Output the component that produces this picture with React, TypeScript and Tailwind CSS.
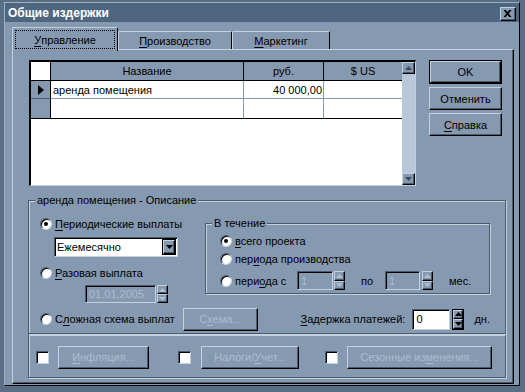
import type { ReactNode } from "react";

// Win95-style 3D edges in the blue-grey theme
const raised =
	"border border-t-[#c4d2e0] border-l-[#c4d2e0] border-r-black border-b-black shadow-[inset_-1px_-1px_0_#4a5b6f]";
const sunken =
	"border border-t-[#4a5b6f] border-l-[#4a5b6f] border-r-[#c4d2e0] border-b-[#c4d2e0] shadow-[inset_1px_1px_0_#000]";
const etched =
	"border border-[#4a5b6f] shadow-[inset_1px_1px_0_#c4d2e0,1px_1px_0_#c4d2e0]";

function Btn({
	children,
	className = "",
	disabled,
	isDefault,
}: {
	children: ReactNode;
	className?: string;
	disabled?: boolean;
	isDefault?: boolean;
}) {
	return (
		<div className={`flex ${isDefault ? "border border-black" : ""} ${className}`}>
			<div
				className={`flex flex-1 items-center justify-center ${raised} ${disabled ? "text-[#adbecf]" : "text-black"}`}
			>
				{children}
			</div>
		</div>
	);
}

function Radio({ checked }: { checked?: boolean }) {
	return (
		<span className="flex h-[12px] w-[12px] shrink-0 items-center justify-center rounded-full border border-t-[#4a5b6f] border-l-[#4a5b6f] border-r-[#c4d2e0] border-b-[#c4d2e0] bg-white shadow-[inset_1px_1px_0_#000]">
			{checked && <span className="h-[4px] w-[4px] rounded-full bg-black" />}
		</span>
	);
}

function Check() {
	return (
		<span className={`block h-[13px] w-[13px] shrink-0 bg-white ${sunken}`} />
	);
}

function Arrow({ up, color }: { up?: boolean; color: string }) {
	return (
		<svg width="7" height="4" viewBox="0 0 7 4">
			<path d={up ? "M0 4 L3.5 0 L7 4 Z" : "M0 0 L3.5 4 L7 0 Z"} fill={color} />
		</svg>
	);
}

function Spin({ disabled, className = "" }: { disabled?: boolean; className?: string }) {
	const c = disabled ? "#adbecf" : "#000";
	return (
		<div className={`flex w-[11px] flex-col ${disabled ? "" : "border border-black"} ${className}`}>
			<div className={`flex flex-1 items-center justify-center ${raised}`}>
				<Arrow up color={c} />
			</div>
			<div className={`flex flex-1 items-center justify-center ${raised}`}>
				<Arrow color={c} />
			</div>
		</div>
	);
}

function Field({
	value,
	disabled,
	className = "",
}: {
	value: string;
	disabled?: boolean;
	className?: string;
}) {
	return (
		<div
			className={`flex items-center px-[3px] ${sunken} ${disabled ? "bg-[#8599b1] text-[#adbecf]" : "bg-white text-black"} ${className}`}
		>
			{value}
		</div>
	);
}

function U({ children }: { children: ReactNode }) {
	return <span className="underline underline-offset-2">{children}</span>;
}

export default function App() {
	return (
		<div className="h-[392px] w-[525px] bg-[#5a6e86] pt-[2px] pl-[4px] font-['Liberation_Sans',Arial,sans-serif] text-[11px] leading-[14px] text-black">
			<div className="flex h-[384px] w-[516px] flex-col border border-t-[#9fb0c3] border-l-[#9fb0c3] border-r-black border-b-black bg-[#8599b1]">
				{/* Title bar */}
				<div className="flex h-[19px] items-center justify-between bg-[#4f6680] pl-[3px] pr-[3px]">
					<span className="text-[12px] font-bold text-white">Общие издержки</span>
					<div className={`mt-[2px] flex h-[14px] w-[16px] items-center justify-center ${raised} bg-[#8599b1]`}>
						<svg width="8" height="7" viewBox="0 0 8 7">
							<path d="M1 0 L7 7 M7 0 L1 7 M0 0 L6 7 M6 0 L0 7" stroke="#000" strokeWidth="1.1" />
						</svg>
					</div>
				</div>

				{/* Tabs */}
				<div className="mt-[5px] ml-[7px] flex h-[22px] items-end">
					<div className="relative z-10 -mb-[2px] flex h-[24px] w-[106px] rounded-t-[2px] border border-b-0 border-t-[#c4d2e0] border-l-[#c4d2e0] border-r-black bg-[#8599b1] p-[2px]">
						<div className="flex flex-1 items-center justify-center border border-dotted border-black">
							<U>У</U>правление
						</div>
					</div>
					<div className="flex h-[18px] w-[114px] items-center justify-center rounded-t-[2px] border border-b-0 border-t-[#c4d2e0] border-l-[#c4d2e0] border-r-black">
						<U>П</U>роизводство
					</div>
					<div className="flex h-[18px] w-[98px] items-center justify-center rounded-t-[2px] border border-b-0 border-t-[#c4d2e0] border-l-[#c4d2e0] border-r-black">
						<U>М</U>аркетинг
					</div>
				</div>

				{/* Tab panel */}
				<div className="ml-[7px] h-[335px] w-[502px] border border-t-[#c4d2e0] border-l-[#c4d2e0] border-r-black border-b-black shadow-[inset_-1px_-1px_0_#4a5b6f]">
					<div className="flex pt-[10px] pl-[16px]">
						{/* Grid */}
						<div className="flex h-[126px] w-[387px] border-t-2 border-l-2 border-r border-b border-t-black border-l-black border-r-[#c4d2e0] border-b-[#c4d2e0] bg-white">
							<div className="flex flex-1 flex-col">
								<div className="flex h-[19px]">
									<div className="w-[20px] border-r border-b border-black" />
									<div className="flex w-[193px] items-center justify-center border-r border-b border-black bg-[#8599b1]">
										Название
									</div>
									<div className="flex w-[80px] items-center justify-center border-r border-b border-black bg-[#8599b1]">
										руб.
									</div>
									<div className="flex flex-1 items-center justify-center border-b border-black bg-[#8599b1]">
										$ US
									</div>
								</div>
								<div className="flex h-[18px]">
									<div className="flex w-[20px] items-center justify-center border-r border-b border-r-black border-b-[#4a5b6f] bg-[#8599b1]">
										<svg width="6" height="10" viewBox="0 0 6 10">
											<path d="M0 0 L6 5 L0 10 Z" fill="#000" />
										</svg>
									</div>
									<div className="flex w-[193px] items-center border-r border-b border-[#8599b1] pl-[2px]">
										аренда помещения
									</div>
									<div className="flex w-[80px] items-center justify-end border-r border-b border-[#8599b1] pr-[1px]">
										40 000,00
									</div>
									<div className="flex-1 border-b border-[#8599b1]" />
								</div>
								<div className="flex h-[20px]">
									<div className="w-[20px] border-r border-b border-black bg-[#8599b1]" />
									<div className="w-[193px] border-r border-b border-r-[#8599b1] border-b-black" />
									<div className="w-[80px] border-r border-b border-r-[#8599b1] border-b-black" />
									<div className="flex-1 border-b border-black" />
								</div>
							</div>
							{/* Scrollbar */}
							<div className="flex w-[13px] flex-col justify-between bg-[#b8c8d8]">
								<div className={`flex h-[12px] items-center justify-center bg-[#8599b1] ${raised}`}>
									<Arrow up color="#3a4a5c" />
								</div>
								<div className={`flex h-[12px] items-center justify-center bg-[#8599b1] ${raised}`}>
									<Arrow color="#3a4a5c" />
								</div>
							</div>
						</div>

						{/* Dialog buttons */}
						<div className="ml-[13px] flex w-[73px] flex-col gap-[3px]">
							<Btn isDefault className="h-[24px]">
								OK
							</Btn>
							<Btn className="h-[23px]">Отменить</Btn>
							<Btn className="h-[23px]">
								<span>
									<U>С</U>правка
								</span>
							</Btn>
						</div>
					</div>

					{/* Description group */}
					<div className={`relative mt-[14px] ml-[15px] h-[134px] w-[478px] ${etched}`}>
						<span className="absolute -top-[8px] left-[6px] bg-[#8599b1] px-[2px]">
							аренда помещения - Описание
						</span>
						<div className="flex">
							{/* Left column */}
							<div className="flex w-[176px] flex-col pl-[11px]">
								<div className="mt-[16px] flex items-center gap-[3px]">
									<Radio checked />
									<span>
										<U>П</U>ериодические выплаты
									</span>
								</div>
								<div className={`mt-[6px] ml-[14px] flex h-[20px] w-[124px] items-center justify-between bg-white pl-[2px] pr-[1px] ${sunken}`}>
									<span>Ежемесячно</span>
									<div className="flex h-[16px] w-[14px] border border-black">
										<div className={`flex flex-1 items-center justify-center bg-[#8599b1] ${raised}`}>
											<Arrow color="#000" />
										</div>
									</div>
								</div>
								<div className="mt-[9px] flex items-center gap-[3px]">
									<Radio />
									<span>
										<U>Р</U>азовая выплата
									</span>
								</div>
								<div className="mt-[5px] ml-[45px] flex h-[18px]">
									<Field value="01.01.2005" disabled className="w-[71px]" />
									<Spin disabled className="ml-[1px]" />
								</div>
							</div>

							{/* During group */}
							<div className={`relative mt-[22px] h-[71px] w-[285px] ${etched}`}>
								<span className="absolute -top-[8px] left-[6px] bg-[#8599b1] px-[2px]">
									В течение
								</span>
								<div className="flex flex-col pl-[14px]">
									<div className="mt-[10px] flex items-center gap-[3px]">
										<Radio checked />
										<span>
											<U>в</U>сего проекта
										</span>
									</div>
									<div className="mt-[4px] flex items-center gap-[3px]">
										<Radio />
										<span>
											пер<U>и</U>ода производства
										</span>
									</div>
									<div className="mt-[5px] flex h-[19px] items-center">
										<Radio />
										<span className="ml-[3px] w-[62px]">
											пери<U>о</U>да с
										</span>
										<Field value="1" disabled className="h-[19px] w-[36px]" />
										<Spin className="ml-[1px] h-[19px]" disabled />
										<span className="ml-[16px] w-[24px]">по</span>
										<Field value="1" disabled className="h-[19px] w-[35px]" />
										<Spin className="ml-[2px] h-[19px]" disabled />
										<span className="ml-[16px]">мес.</span>
									</div>
								</div>
							</div>
						</div>

						{/* Bottom row of group */}
						<div className="mt-[5px] flex h-[22px] items-center pl-[11px] pr-[15px]">
							<Radio />
							<span className="ml-[3px]">
								С<U>л</U>ожная схема выплат
							</span>
							<Btn disabled className="ml-[8px] h-[23px] w-[75px]">
								<span>
									С<U>х</U>ема...
								</span>
							</Btn>
							<span className="ml-auto">
								<U>З</U>адержка платежей:
							</span>
							<Field value="0" className="ml-[7px] h-[21px] w-[38px]" />
							<Spin className="ml-[2px] h-[21px] w-[12px]" />
							<span className="ml-[10px]">дн.</span>
						</div>
					</div>

					{/* Options row */}
					<div className={`ml-[15px] flex h-[44px] w-[478px] items-center pt-[2px] pl-[7px] ${etched}`}>
						<Check />
						<Btn disabled className="ml-[9px] h-[23px] w-[91px]">
							<span>
								<U>И</U>нфляция...
							</span>
						</Btn>
						<span className="ml-[29px]">
							<Check />
						</span>
						<Btn disabled className="ml-[10px] h-[23px] w-[98px]">
							<span>
								Налоги/<U>У</U>чет...
							</span>
						</Btn>
						<span className="ml-[26px]">
							<Check />
						</span>
						<Btn disabled className="ml-[9px] h-[23px] w-[145px]">
							<span>
								Сезонные из<U>м</U>енения...
							</span>
						</Btn>
					</div>
				</div>
			</div>
		</div>
	);
}
